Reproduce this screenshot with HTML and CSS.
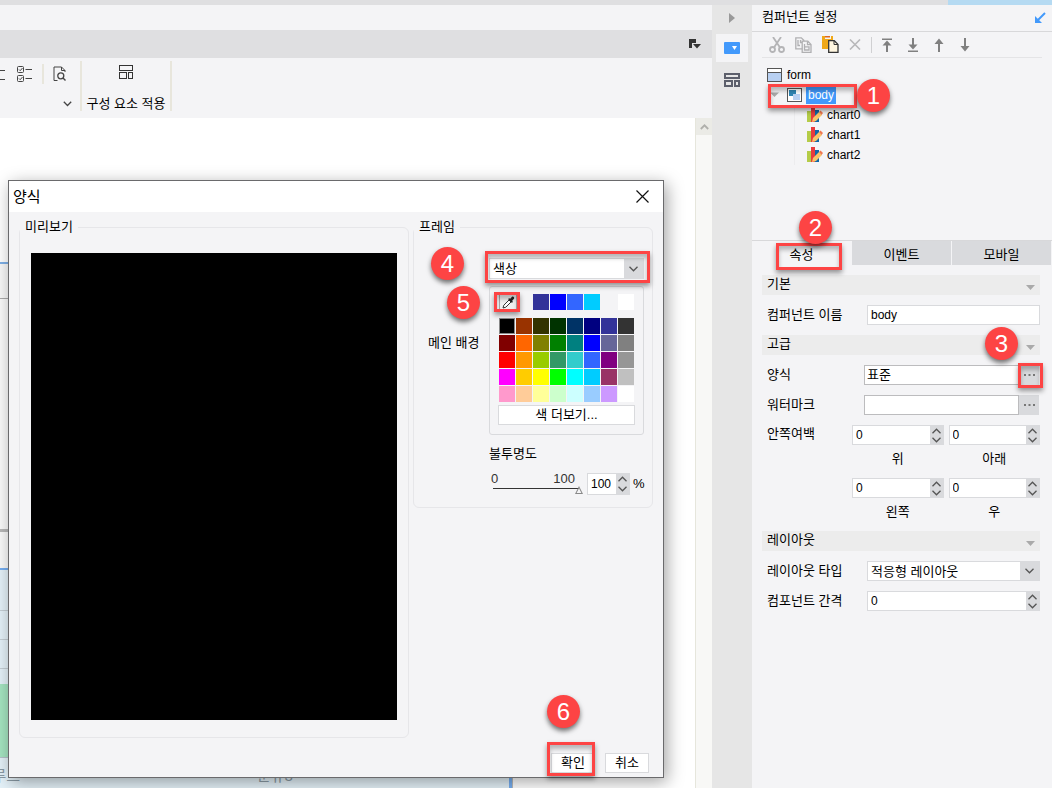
FILE: index.html
```html
<!DOCTYPE html>
<html lang="ko">
<head>
<meta charset="utf-8">
<title>양식</title>
<link rel="stylesheet" href="styles.css">
</head>
<body>
<div class="app">
  <div class="top-strip"><span class="top-strip-accent"></span></div>
  <div class="workspace">
    <main class="main">
      <div class="title-strip"></div>
      <div class="tab-strip">
        <button class="icon-button" aria-label="탭 목록">
          <svg width="14" height="12" viewBox="0 0 14 12"><path d="M1 1h7v4H4v5H1z" fill="#333"/><path d="M5 6h8L9 10.500z" fill="#333"/></svg>
        </button>
      </div>
      <div class="ribbon">
        <div class="ribbon-group ribbon-tools">
          <div class="ribbon-row">
            <svg width="5" height="18" viewBox="0 0 5 18" stroke="#444"><path d="M0 5.500h5M0 14.500h5"/></svg>
            <button class="icon-button" aria-label="체크 목록">
              <svg width="16" height="17" viewBox="0 0 16 17" fill="none" stroke="#444"><rect x=".5" y=".5" width="6" height="6" rx="1"/><rect x=".5" y="9.500" width="6" height="6" rx="1"/><path d="M2 3.500l1.200 1.200L5.500 2M2 12.500l1.200 1.200L5.500 11M8.500 3.500H15M8.500 12.500H15"/></svg>
            </button>
            <span class="ribbon-divider"></span>
            <button class="icon-button" aria-label="미리보기 검색">
              <svg width="14" height="16" viewBox="0 0 14 16" fill="none" stroke="#444"><path d="M4.500 14.500h-3.500V1h7.500l3.500 3.500V6M8.500 1v3.500h3.500"/><circle cx="7.800" cy="9.800" r="3" stroke-width="1.300"/><path d="M10 12l2.500 2.500" stroke-width="1.400"/></svg>
            </button>
          </div>
          <button class="icon-button ribbon-more" aria-label="더보기">
            <svg width="9" height="6" viewBox="0 0 9 6" fill="none" stroke="#444" stroke-width="1.300"><path d="M.8.8l3.700 3.700L8.200.8"/></svg>
          </button>
        </div>
        <button class="ribbon-group ribbon-apply">
          <svg width="14" height="14" viewBox="0 0 14 14" fill="none" stroke="#333"><rect x=".5" y=".5" width="13" height="5"/><rect x=".5" y="7.500" width="7" height="6"/><rect x="9.500" y="7.500" width="4" height="6"/></svg>
          <span>구성 요소 적용</span>
        </button>
      </div>
      <div class="canvas">
        <div class="report">
          <div class="report-head"></div>
          <div class="report-body"></div>
          <div class="report-foot"></div>
          <div class="chart">
            <div class="chart-lines"></div>
            <div class="chart-bar"></div>
            <div class="chart-labels"><span class="label-cut">루트</span><span>분류3</span></div>
          </div>
        </div>
        <div class="scrollbar">
          <button class="scroll-up" aria-label="위로 스크롤">
            <svg width="9" height="6" viewBox="0 0 9 6" fill="none" stroke="#b0b0ac" stroke-width="1.800"><path d="M.8 5l3.700-3.700L8.200 5"/></svg>
          </button>
        </div>
      </div>
    </main>

    <nav class="rail">
      <button class="rail-button" aria-label="접기"><svg width="6" height="10" viewBox="0 0 6 10"><path d="M0 0l6 5-6 5z" fill="#999"/></svg></button>
      <button class="rail-button active" aria-label="컴퍼넌트 설정"><svg width="16" height="12" viewBox="0 0 16 12"><rect width="16" height="12" rx="1" fill="#4299fb"/><path d="M8 4h5l-2.500 4z" fill="#fff"/></svg></button>
      <button class="rail-button" aria-label="구성 요소"><svg width="16" height="14" viewBox="0 0 16 14" fill="none" stroke="#5c5f6b" stroke-width="2"><path d="M1 1h14v4H1zM1 8h7v5H1zM11 8h4v5h-4z"/></svg></button>
    </nav>

    <aside class="panel">
      <header class="panel-header">
        <h2>컴퍼넌트 설정</h2>
        <button class="icon-button" aria-label="도킹"><svg width="12" height="12" viewBox="0 0 12 12"><path d="M11 1L4 8" stroke="#4299fb" stroke-width="2"/><path d="M1 4v7h7z" fill="#4299fb"/></svg></button>
      </header>
      <div class="panel-tools">
        <button class="icon-button" aria-label="잘라내기"><svg width="16" height="16" viewBox="0 0 16 16" fill="none" stroke="#b4b4b6" stroke-width="1.800"><path d="M4 0l7 10.500M12 0L5 10.500"/><circle cx="3.500" cy="12.500" r="2.500"/><circle cx="12.500" cy="12.500" r="2.500"/></svg></button>
        <button class="icon-button" aria-label="복사"><svg width="17" height="16" viewBox="0 0 17 16" fill="#f4f4f6" stroke="#b0b0b2" stroke-width="1.300"><path d="M.8.8h5.500l2.500 2.500v8.500h-8z"/><path d="M3 3v5.500h2M5.500 3v2.500h2" fill="none"/><path d="M7.200 4.200h5.600l3.200 3.200v7.900H7.200z"/><path d="M12.500 4.500v3.200H16M9.500 7v6h4.500V9.800H9.500" fill="none"/></svg></button>
        <button class="icon-button" aria-label="붙여넣기"><svg width="17" height="17" viewBox="0 0 17 17"><path d="M0 0h3v3h6V0h2v5H6v8H0z" fill="#f0a818"/><path d="M3 0h5v1.500H3z" fill="#e0681c"/><path d="M6.700 4.700h5.600l3.700 3.700v7.900H6.700z" fill="#fff6e0" stroke="#333" stroke-width="1.300"/><path d="M12 5v3.500h4" fill="none" stroke="#333"/></svg></button>
        <button class="icon-button" aria-label="삭제"><svg width="12" height="11" viewBox="0 0 12 11" stroke="#b8b8ba" stroke-width="1.600"><path d="M1 .5l10 10M11 .5l-10 10"/></svg></button>
        <span class="tool-divider"></span>
        <button class="icon-button" aria-label="맨 위로"><svg width="12" height="14" viewBox="0 0 12 14"><path d="M1 .5h10v1.500H1zM5 6h2v8H5z" fill="#808080"/><path d="M6 2.500l4.500 5h-9z" fill="#808080"/></svg></button>
        <button class="icon-button" aria-label="맨 아래로"><svg width="12" height="14" viewBox="0 0 12 14"><path d="M1 12.500h10V14H1zM5 0h2v8H5z" fill="#808080"/><path d="M6 11.500l4.500-5h-9z" fill="#808080"/></svg></button>
        <button class="icon-button" aria-label="위로"><svg width="12" height="14" viewBox="0 0 12 14"><path d="M5 4h2v10H5z" fill="#808080"/><path d="M6 .5l4.500 5.500h-9z" fill="#808080"/></svg></button>
        <button class="icon-button" aria-label="아래로"><svg width="12" height="14" viewBox="0 0 12 14"><path d="M5 0h2v10H5z" fill="#808080"/><path d="M6 13.500L10.500 8h-9z" fill="#808080"/></svg></button>
      </div>

      <ul class="tree">
        <li class="tree-form"><svg width="15" height="14" viewBox="0 0 15 14"><rect x=".5" y=".5" width="14" height="13" fill="#fff" stroke="#555"/><path d="M1 4.500h13V13H1z" fill="#b8d0f2"/><path d="M1 4.500h13" stroke="#555"/></svg><span>form</span></li>
        <li class="tree-body">
          <svg width="9" height="6" viewBox="0 0 9 6"><path d="M0 .5h9L4.500 5z" fill="#aaa"/></svg>
          <svg width="15" height="14" viewBox="0 0 15 14"><rect x=".5" y=".5" width="14" height="13" fill="#fff" stroke="#555"/><path d="M2 2h7v6H2z" fill="#2f86b4"/><path d="M6 6h7v6H6z" fill="#b8d0f2"/></svg>
          <span class="selected">body</span>
          <span class="mark mark-body"></span><span class="badge badge-1">1</span>
        </li>
        <li class="tree-leaf"><svg width="16" height="16" viewBox="0 0 16 16"><path d="M0 4h4v11H0z" fill="#b4cc48"/><path d="M4 0h4v15H4z" fill="#e83c3c"/><path d="M8 3h4v12H8z" fill="#1068a8"/><path d="M5 15l1-4 6-6 3 3-6 6z" fill="#f8c468"/><path d="M12 5l1.500-1.500 2.500 2.500L14.500 8z" fill="#f07850"/></svg><span>chart0</span></li>
        <li class="tree-leaf"><svg width="16" height="16" viewBox="0 0 16 16"><path d="M0 4h4v11H0z" fill="#b4cc48"/><path d="M4 0h4v15H4z" fill="#e83c3c"/><path d="M8 3h4v12H8z" fill="#1068a8"/><path d="M5 15l1-4 6-6 3 3-6 6z" fill="#f8c468"/><path d="M12 5l1.500-1.500 2.500 2.500L14.500 8z" fill="#f07850"/></svg><span>chart1</span></li>
        <li class="tree-leaf"><svg width="16" height="16" viewBox="0 0 16 16"><path d="M0 4h4v11H0z" fill="#b4cc48"/><path d="M4 0h4v15H4z" fill="#e83c3c"/><path d="M8 3h4v12H8z" fill="#1068a8"/><path d="M5 15l1-4 6-6 3 3-6 6z" fill="#f8c468"/><path d="M12 5l1.500-1.500 2.500 2.500L14.500 8z" fill="#f07850"/></svg><span>chart2</span></li>
      </ul>

      <div class="tabs">
        <button class="tab tab-active">속성<span class="mark mark-tab"></span><span class="badge badge-2">2</span></button>
        <button class="tab">이벤트</button>
        <button class="tab">모바일</button>
      </div>

      <form class="properties">
        <h3 class="section">기본<svg width="9" height="5" viewBox="0 0 9 5"><path d="M0 0h9L4.500 5z" fill="#aaa"/></svg></h3>
        <div class="row"><label for="name">컴퍼넌트 이름</label><input id="name" class="text-box" type="text" value="body"></div>
        <h3 class="section">고급<svg width="9" height="5" viewBox="0 0 9 5"><path d="M0 0h9L4.500 5z" fill="#aaa"/></svg><span class="badge badge-3">3</span></h3>
        <div class="row row-browse"><label for="style">양식</label><input id="style" class="text-box" type="text" value="표준"><button type="button" class="browse" aria-label="양식 편집"><svg width="11" height="2" viewBox="0 0 11 2"><path d="M0 0h2v2H0zM4.500 0h2v2h-2zM9 0h2v2H9z" fill="#777"/></svg><span class="mark mark-browse"></span></button></div>
        <div class="row row-browse"><label for="watermark">워터마크</label><input id="watermark" class="text-box" type="text" value=""><button type="button" class="browse" aria-label="워터마크 편집"><svg width="11" height="2" viewBox="0 0 11 2"><path d="M0 0h2v2H0zM4.500 0h2v2h-2zM9 0h2v2H9z" fill="#777"/></svg></button></div>
        <div class="row row-margins">
          <span class="margins-title">안쪽여백</span>
          <div class="margins">
            <div class="margin-field"><div class="spinner"><input id="m-top" type="number" value="0"><span class="steps"><button type="button" aria-label="증가"><svg width="9" height="6" viewBox="0 0 9 6"><path d="M.5 5.200l4-4 4 4"/></svg></button><button type="button" aria-label="감소"><svg width="9" height="6" viewBox="0 0 9 6"><path d="M.5.800l4 4 4-4"/></svg></button></span></div><label for="m-top">위</label></div>
            <div class="margin-field"><div class="spinner"><input id="m-bottom" type="number" value="0"><span class="steps"><button type="button" aria-label="증가"><svg width="9" height="6" viewBox="0 0 9 6"><path d="M.5 5.200l4-4 4 4"/></svg></button><button type="button" aria-label="감소"><svg width="9" height="6" viewBox="0 0 9 6"><path d="M.5.800l4 4 4-4"/></svg></button></span></div><label for="m-bottom">아래</label></div>
            <div class="margin-field"><div class="spinner"><input id="m-left" type="number" value="0"><span class="steps"><button type="button" aria-label="증가"><svg width="9" height="6" viewBox="0 0 9 6"><path d="M.5 5.200l4-4 4 4"/></svg></button><button type="button" aria-label="감소"><svg width="9" height="6" viewBox="0 0 9 6"><path d="M.5.800l4 4 4-4"/></svg></button></span></div><label for="m-left">왼쪽</label></div>
            <div class="margin-field"><div class="spinner"><input id="m-right" type="number" value="0"><span class="steps"><button type="button" aria-label="증가"><svg width="9" height="6" viewBox="0 0 9 6"><path d="M.5 5.200l4-4 4 4"/></svg></button><button type="button" aria-label="감소"><svg width="9" height="6" viewBox="0 0 9 6"><path d="M.5.800l4 4 4-4"/></svg></button></span></div><label for="m-right">우</label></div>
          </div>
        </div>
        <h3 class="section">레이아웃<svg width="9" height="5" viewBox="0 0 9 5"><path d="M0 0h9L4.500 5z" fill="#aaa"/></svg></h3>
        <div class="row"><label for="layout">레이아웃 타입</label><div class="combo"><select id="layout"><option>적응형 레이아웃</option></select><span class="combo-arrow"><svg width="9" height="6" viewBox="0 0 9 6"><path d="M.5.800l4 4 4-4"/></svg></span></div></div>
        <div class="row"><label for="gap">컴포넌트 간격</label><div class="spinner"><input id="gap" type="number" value="0"><span class="steps"><button type="button" aria-label="증가"><svg width="9" height="6" viewBox="0 0 9 6"><path d="M.5 5.200l4-4 4 4"/></svg></button><button type="button" aria-label="감소"><svg width="9" height="6" viewBox="0 0 9 6"><path d="M.5.800l4 4 4-4"/></svg></button></span></div></div>
      </form>
    </aside>
  </div>
</div>

<section class="dialog" role="dialog" aria-labelledby="dialog-title">
  <header class="dialog-header">
    <h1 id="dialog-title">양식</h1>
    <button class="icon-button" aria-label="닫기"><svg width="13" height="13" viewBox="0 0 13 13" stroke="#111" stroke-width="1.200"><path d="M.5.500l12 12M12.500.500l-12 12"/></svg></button>
  </header>
  <div class="dialog-body">
    <fieldset class="group preview"><legend>미리보기</legend><div class="preview-image"></div></fieldset>
    <fieldset class="group frame">
      <legend>프레임</legend>
      <div class="frame-grid">
        <label class="frame-label" for="fill">메인 배경</label>
        <div class="frame-controls">
          <div class="combo combo-fill"><select id="fill"><option>색상</option></select><span class="combo-arrow"><svg width="9" height="6" viewBox="0 0 9 6"><path d="M.5.800l4 4 4-4"/></svg></span><span class="mark mark-fill"></span><span class="badge badge-4">4</span></div>
          <div class="palette">
            <div class="recent">
              <button class="picker" aria-label="스포이트"><svg width="14" height="14" viewBox="0 0 14 14"><path d="M2 12l.8-2.800L8 4l2 2-5.200 5.200z" fill="#fff" stroke="#333"/><path d="M7 3l1.200-.8 1 .6L11 .8c1.200-.8 2.800.8 2 2L11.200 4.800l.6 1L11 7z" fill="#222"/></svg><span class="mark mark-picker"></span><span class="badge badge-5">5</span></button>
              <span class="swatch c-333399"></span><span class="swatch c-0000ff"></span><span class="swatch c-3366ff"></span><span class="swatch c-00ccff"></span><span class="swatch c-none"></span><span class="swatch c-ffffff"></span>
            </div>
            <div class="swatches">
              <span class="swatch c-000000"></span><span class="swatch c-993300"></span><span class="swatch c-333300"></span><span class="swatch c-003300"></span><span class="swatch c-003366"></span><span class="swatch c-000080"></span><span class="swatch c-333399"></span><span class="swatch c-333333"></span>
              <span class="swatch c-800000"></span><span class="swatch c-ff6600"></span><span class="swatch c-808000"></span><span class="swatch c-008000"></span><span class="swatch c-008080"></span><span class="swatch c-0000ff"></span><span class="swatch c-666699"></span><span class="swatch c-808080"></span>
              <span class="swatch c-ff0000"></span><span class="swatch c-ff9900"></span><span class="swatch c-99cc00"></span><span class="swatch c-339966"></span><span class="swatch c-33cccc"></span><span class="swatch c-3366ff"></span><span class="swatch c-800080"></span><span class="swatch c-969696"></span>
              <span class="swatch c-ff00ff"></span><span class="swatch c-ffcc00"></span><span class="swatch c-ffff00"></span><span class="swatch c-00ff00"></span><span class="swatch c-00ffff"></span><span class="swatch c-00ccff"></span><span class="swatch c-993366"></span><span class="swatch c-c0c0c0"></span>
              <span class="swatch c-ff99cc"></span><span class="swatch c-ffcc99"></span><span class="swatch c-ffff99"></span><span class="swatch c-ccffcc"></span><span class="swatch c-ccffff"></span><span class="swatch c-99ccff"></span><span class="swatch c-cc99ff"></span><span class="swatch c-ffffff"></span>
            </div>
            <button class="more-colors">색 더보기...</button>
          </div>
          <label class="opacity-title" for="opacity">불투명도</label>
          <div class="opacity">
            <div class="slider"><div class="slider-scale"><span>0</span><span>100</span></div><input id="opacity" type="range" min="0" max="100" value="100"></div>
            <div class="spinner spinner-large"><input type="number" value="100" aria-label="불투명도 값"><span class="steps"><button type="button" aria-label="증가"><svg width="9" height="6" viewBox="0 0 9 6"><path d="M.5 5.200l4-4 4 4"/></svg></button><button type="button" aria-label="감소"><svg width="9" height="6" viewBox="0 0 9 6"><path d="M.5.800l4 4 4-4"/></svg></button></span></div>
            <span>%</span>
          </div>
        </div>
      </div>
    </fieldset>
  </div>
  <footer class="dialog-footer">
    <button class="dialog-button">확인<span class="mark mark-ok"></span><span class="badge badge-6">6</span></button>
    <button class="dialog-button">취소</button>
  </footer>
</section>
</body>
</html>
```

FILE: styles.css
```css
* { box-sizing: border-box; }

body {
  margin: 0;
  font: 13px/20px "Liberation Sans", "Noto Sans CJK KR", sans-serif;
  color: #000;
  background: #f4f4f6;
}

button, input, select { font: inherit; color: inherit; margin: 0; padding: 0; border: 0; border-radius: 0; }
button { background: none; }
svg { display: block; flex: none; }
h1, h2, h3 { margin: 0; font-weight: normal; font-size: 13px; }

.icon-button { display: flex; align-items: center; justify-content: center; }

.app { display: flex; flex-direction: column; height: 100vh; overflow: hidden; }
.top-strip { display: flex; justify-content: flex-end; height: 5px; background: #dfdfe1; }
.top-strip-accent { width: 104px; background: #b5daf2; }
.workspace { display: flex; flex: 1; min-height: 0; }

/* Main area */
.main { display: flex; flex-direction: column; flex: 1; min-width: 0; }
.title-strip { height: 25px; }
.tab-strip { display: flex; align-items: center; justify-content: flex-end; height: 28px; padding-right: 10px; background: #dfdfe1; }
.ribbon { display: flex; height: 60px; padding: 3px 0 7px; }
.ribbon-group { border-right: 2px solid #e8e6dc; }
.ribbon-tools { display: flex; flex-direction: column; justify-content: space-between; width: 82px; padding: 3px 0 4px; }
.ribbon-row { display: flex; align-items: center; gap: 9px; height: 20px; }
.ribbon-row > svg { margin-right: 3px; }
.ribbon-divider { width: 2px; height: 20px; background: #e8e6dc; }
.ribbon-more { align-self: flex-end; margin-right: 8px; }
.ribbon-apply { display: flex; flex-direction: column; align-items: center; gap: 15px; width: 90px; padding-top: 4px; }

.canvas { display: flex; justify-content: space-between; flex: 1; min-height: 0; background: #fff; }
.report { display: flex; flex-direction: column; width: 513px; margin-top: 144px; border-right: 1px solid #bbb; }
.report-head { height: 37px; border-top: 2px solid #7fb0e6; border-bottom: 1px solid #aaa; background: #f8f8f8; }
.report-body { height: 233px; border-bottom: 3px solid #b8b8b8; background: #fafafa; }
.report-foot { height: 36px; background: #fafafa; }
.chart { flex: 1; border-top: 2px solid #76aef0; border-right: 3px solid #76aef0; background: #e4f1f8; }
.chart-lines { height: 114px; padding-top: 10px; background: repeating-linear-gradient(#e4f1f8 0 28px, #c4ced4 28px 29px) 0 12px; }
.chart-bar { width: 12px; height: 74px; background: #a4e4c0; border-bottom: 1px solid #b4c0c8; }
.chart-labels { display: flex; gap: 237px; padding-top: 8px; font-size: 15px; line-height: 20px; color: #8a9aa4; }
.label-cut { display: flex; justify-content: flex-end; width: 20px; white-space: nowrap; }
.scrollbar { width: 17px; border-left: 1px solid #e6e6dc; background: #f8f8f6; }
.scroll-up { display: flex; align-items: center; justify-content: center; width: 16px; height: 17px; background: #ebebe6; }

/* Rail */
.rail { display: flex; flex-direction: column; gap: 4px; width: 40px; padding: 0 4px; background: #e6e6e6; }
.rail-button { display: flex; align-items: center; justify-content: center; height: 28px; }
.rail-button:first-child { height: 25px; }
.active { background: #f4f4f6; }

/* Component panel */
.panel { width: 300px; }
.panel-header { display: flex; align-items: center; justify-content: space-between; height: 27px; padding: 0 0 2px 10px; border-bottom: 1px solid #d8d8da; }
.panel-header .icon-button { padding: 2px 6px 0; }
.panel-tools { display: flex; align-items: center; gap: 10px; height: 26px; margin: 0 10px; padding: 0 7px; border-bottom: 1px solid #e4e4e6; }
.panel-tools .icon-button:nth-child(n+7) { margin-left: 4px; }
.tool-divider { width: 1px; height: 16px; margin-right: -1px; background: #d0d0d2; }

.tree { margin: 0; padding: 7px 0 0 15px; height: 182px; list-style: none; font-size: 12px; }
.tree li { display: flex; align-items: center; height: 20px; gap: 5px; }
.tree .tree-body { position: relative; padding-left: 3px; gap: 8px; }
.tree-body svg + svg { margin-right: -4px; }
.selected { padding: 0 2px; line-height: 18px; background: #4299fb; color: #fff; }
.tree .tree-leaf { margin-left: 27px; padding-left: 12px; gap: 4px; border-left: 1px solid #ececee; }

.tabs { display: flex; gap: 1px; height: 25px; padding-right: 1px; border-top: 1px solid #d8d8da; }
.tab { flex: 1; padding-top: 3px; background: #d9dadd; }
.tab-active { position: relative; background: #f4f4f6; }

.properties { display: flex; flex-direction: column; gap: 10px; padding: 10px 12px 0 10px; }
.section { position: relative; display: flex; justify-content: space-between; align-items: center; height: 20px; padding: 0 5px 2px; line-height: 18px; background: #ececec; }
.section svg { margin-top: 6px; }
.row { display: flex; align-items: center; height: 20px; padding-left: 5px; }
.row > label { width: 100px; }
.text-box { flex: 1; min-width: 0; height: 20px; padding: 0 3px; border: 1px solid #d9dadd; background: #fff; }
#name, input[type="number"] { font-size: 12px; }
.row-browse { padding-right: 1px; }
.row-browse > label { width: 97px; }
.row-browse .text-box { padding: 0 2px; border-color: #bcbcbe; }
.browse { position: relative; display: flex; align-items: center; justify-content: center; width: 20px; height: 20px; background: #d9dadd; }
.row-margins { height: auto; align-items: flex-start; margin-bottom: -10px; }
.margins-title { width: 85px; line-height: 18px; }
.margins { display: grid; grid-template-columns: 1fr 1fr; flex: 1; gap: 0 5px; }
.margin-field { display: flex; flex-direction: column; height: 53px; }
.margin-field label { line-height: 28px; text-align: center; }

.spinner { display: flex; flex: 1; min-width: 0; border: 1px solid #d9dadd; background: #fff; }
.margin-field .spinner, .row > .spinner { flex: none; height: 20px; }
.row > .spinner, .row > .combo { flex: 1; }
.spinner input { flex: 1; width: 0; padding-left: 3px; background: none; appearance: textfield; line-height: 18px; }
.spinner input::-webkit-inner-spin-button { appearance: none; margin: 0; }
.steps { display: flex; flex-direction: column; width: 13px; background: #d9dadd; }
.steps button { display: flex; flex: 1; align-items: center; justify-content: center; min-height: 0; }
.steps svg, .combo-arrow svg { fill: none; stroke: #555; stroke-width: 1.3; }

.combo { position: relative; display: flex; height: 20px; border: 1px solid #d9dadd; background: #fff; }
.combo select { flex: 1; min-width: 0; padding: 0 3px; background: none; appearance: none; }
.combo-arrow { display: flex; align-items: center; justify-content: center; width: 19px; background: #d9dadd; pointer-events: none; }

/* Dialog */
.dialog {
  position: absolute;
  left: 8px;
  top: 180px;
  width: 656px;
  border: 1px solid #6a6a6c;
  background: #f4f4f6;
  box-shadow: 3px 4px 16px rgba(0, 0, 0, .36);
}
.dialog-header { display: flex; align-items: center; justify-content: space-between; height: 31px; padding: 0 14px 0 4px; background: #fff; }
.dialog-header h1 { font-size: 15px; }
.dialog-body { display: flex; gap: 4px; padding: 5px 10px 0; align-items: flex-start; }
.group { min-width: 0; margin: 0; border: 1px solid #e6e6e9; border-radius: 6px; }
.group legend { padding: 0 5px; line-height: 20px; }
.preview { flex: 1; padding: 16px 11px 17px; }
.preview legend { margin-left: -11px; }
.preview-image { height: 467px; background: #000; }
.frame { width: 240px; padding: 21px 8px 12px 14px; }
.frame legend { margin-left: -14px; }
.frame-grid { display: flex; }
.frame-label { width: 61px; padding-top: 75px; }
.frame-controls { flex: 1; min-width: 0; }
.combo-fill { height: 21px; }
.palette { margin-top: 7px; padding: 7px 8px 9px; border: 1px solid #d9dadd; border-radius: 3px; }
.recent { display: flex; gap: 1px; height: 16px; margin: 0 1px 8px; }
.picker { position: relative; display: flex; align-items: center; justify-content: center; width: 18px; height: 18px; margin-right: 15px; border: 1px solid #aaa; background: #f0f0f0; }
.swatches { display: grid; grid-template-columns: repeat(8, 16px); gap: 1px; margin: 0 1px 3px; }
.swatch { flex: none; width: 16px; height: 16px; }
.more-colors { display: block; width: 100%; height: 20px; border: 1px solid #d9dadd; background: #fff; line-height: 18px; }
.opacity-title { display: block; margin: 9px 0; }
.opacity { display: flex; align-items: center; height: 22px; }
.slider { width: 94px; margin-right: 4px; }
.slider-scale { display: flex; justify-content: space-between; padding: 0 8px 0 2px; line-height: 12px; color: #333; }
.slider input { display: block; width: 94px; height: 10px; appearance: none; background: linear-gradient(#333, #333) 4px 3px / 86px 1px no-repeat; }
.slider input::-webkit-slider-thumb { appearance: none; width: 8px; height: 8px; background: #888; clip-path: polygon(50% 0, 100% 100%, 0 100%, 50% 0, 50% 28%, 20% 86%, 80% 86%, 50% 28%); }
.spinner-large { flex: none; width: 43px; height: 22px; margin-right: 3px; }

.dialog-footer { display: flex; justify-content: flex-end; gap: 10px; padding: 15px 14px 4px; }
.dialog-button { position: relative; width: 44px; height: 20px; border: 1px solid #d9dadd; background: #fff; line-height: 18px; }

/* Callouts drawn over the interface */
.mark {
  position: absolute;
  z-index: 1;
  border: 3px solid #fd4444;
  box-shadow: 0 3px 5px rgba(0, 0, 0, .4), inset 0 4px 4px rgba(0, 0, 0, .25);
  pointer-events: none;
}
.badge {
  position: absolute;
  z-index: 2;
  width: 33px;
  height: 33px;
  border-radius: 50%;
  background: #fd4444;
  box-shadow: 0 3px 5px rgba(0, 0, 0, .55);
  color: #fff;
  font-size: 24px;
  line-height: 33px;
  text-align: center;
}
.mark-body { left: 1px; top: -1px; width: 89px; height: 24px; }
.badge-1 { left: 90px; top: -6px; }
.mark-tab { left: 24px; top: 2px; width: 66px; height: 27px; }
.badge-2 { left: 47px; top: -30px; }
.badge-3 { right: 22px; top: -8px; }
.mark-browse { left: -1px; top: -2px; width: 25px; height: 25px; }
.mark-fill { left: -5px; top: -8px; width: 165px; height: 32px; }
.badge-4 { left: -59px; top: -12px; }
.mark-picker { left: -6px; top: -3px; width: 26px; height: 20px; }
.badge-5 { left: -53px; top: -9px; }
.mark-ok { left: -5px; top: -12px; width: 48px; height: 34px; }
.badge-6 { left: -5px; top: -59px; }

/* Palette colours */
.c-000000 { background: #000; border: 1px solid #888; }
.c-993300 { background: #993300; }
.c-333300 { background: #333300; }
.c-003300 { background: #003300; }
.c-003366 { background: #003366; }
.c-000080 { background: #000080; }
.c-333399 { background: #333399; }
.c-333333 { background: #333333; }
.c-800000 { background: #800000; }
.c-ff6600 { background: #ff6600; }
.c-808000 { background: #808000; }
.c-008000 { background: #008000; }
.c-008080 { background: #008080; }
.c-0000ff { background: #0000ff; }
.c-666699 { background: #666699; }
.c-808080 { background: #808080; }
.c-ff0000 { background: #ff0000; }
.c-ff9900 { background: #ff9900; }
.c-99cc00 { background: #99cc00; }
.c-339966 { background: #339966; }
.c-33cccc { background: #33cccc; }
.c-3366ff { background: #3366ff; }
.c-800080 { background: #800080; }
.c-969696 { background: #969696; }
.c-ff00ff { background: #ff00ff; }
.c-ffcc00 { background: #ffcc00; }
.c-ffff00 { background: #ffff00; }
.c-00ff00 { background: #00ff00; }
.c-00ffff { background: #00ffff; }
.c-00ccff { background: #00ccff; }
.c-993366 { background: #993366; }
.c-c0c0c0 { background: #c0c0c0; }
.c-ff99cc { background: #ff99cc; }
.c-ffcc99 { background: #ffcc99; }
.c-ffff99 { background: #ffff99; }
.c-ccffcc { background: #ccffcc; }
.c-ccffff { background: #ccffff; }
.c-99ccff { background: #99ccff; }
.c-cc99ff { background: #cc99ff; }
.c-ffffff { background: #fff; }
```
